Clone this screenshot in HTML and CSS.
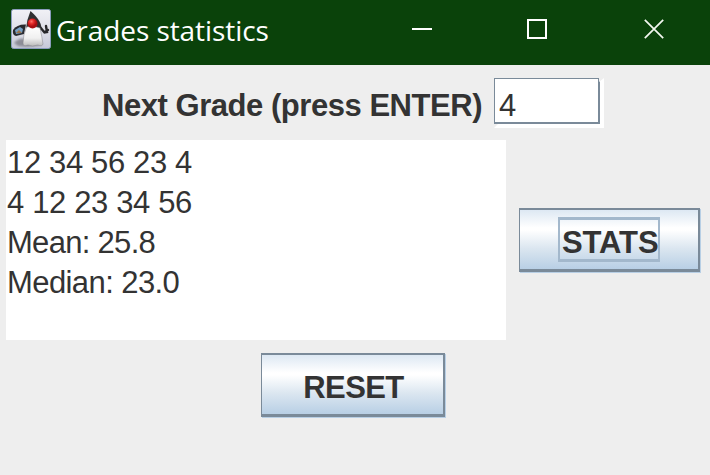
FILE: index.html
```html
<!DOCTYPE html>
<html lang="en">
<head>
<meta charset="utf-8">
<title>Grades statistics</title>
<link rel="stylesheet" href="styles.css">
</head>
<body>
<header class="titlebar">
  <svg class="app-icon" viewBox="0 0 40 40" aria-hidden="true">
    <defs>
      <linearGradient id="tile" x1="0" y1="0" x2="0" y2="1"><stop offset="0" stop-color="#f1f1f6"/><stop offset=".6" stop-color="#dcdde6"/><stop offset="1" stop-color="#c5c8d7"/></linearGradient>
      <linearGradient id="belly" x1="0" y1="0" x2="0" y2="1"><stop offset="0" stop-color="#fff"/><stop offset=".6" stop-color="#f0f0f0"/><stop offset="1" stop-color="#bcbcbc"/></linearGradient>
      <radialGradient id="nose" cx=".4" cy=".3"><stop offset="0" stop-color="#ff7069"/><stop offset=".5" stop-color="#e32625"/><stop offset="1" stop-color="#a80e12"/></radialGradient>
      <filter id="soft"><feGaussianBlur stdDeviation="1.2"/></filter>
    </defs>
    <rect x=".5" y=".5" width="39" height="39" rx="2" fill="url(#tile)" stroke="#8b9cbe"/>
    <path d="M3 34 Q8 28 15 30 L31 36 Q18 39 7 37Z" fill="#777780" opacity=".75" filter="url(#soft)"/>
    <path d="M15 15.500 Q6 15 2 21 Q1 26 5 27 L13 25Z" fill="#292a2e"/>
    <path d="M4 21 L9 18 L12 20 L11 24 L5 25Z" fill="#759fc4"/>
    <path d="M5 24 L8 21 L11 24Z" fill="#9a7349"/>
    <path d="M29 18 L33.500 23.500 L36 23 L35 17 M34 23 L37 21" fill="none" stroke="#28282a" stroke-width="2.4" stroke-linecap="round"/>
    <path d="M19.500 2 Q15.500 11 15 20 L30 21 Q32 13 19.500 2Z" fill="#303032"/>
    <path d="M15.500 18 Q22 16 29 19 Q31 28 32 35 Q31 38 27 36 Q21 38 17 36 Q12 38 12 34 Q12 26 15.500 18Z" fill="url(#belly)" stroke="#85858a" stroke-width=".5"/>
    <circle cx="21.500" cy="14.500" r="5" fill="url(#nose)"/>
  </svg>
  <h1 class="title">Grades statistics</h1>
  <svg class="window-controls" viewBox="0 0 260 24" aria-hidden="true">
    <path d="M2 11H22" stroke="#fff" stroke-width="2"/>
    <rect x="118" y="2" width="18" height="18" fill="none" stroke="#fff" stroke-width="2"/>
    <path d="M234.800 1.800L253.200 20.200M253.200 1.800L234.800 20.200" stroke="#f3f7f0" stroke-width="1.700"/>
  </svg>
</header>
<main class="content">
  <div class="entry">
    <label class="label" for="grade">Next Grade (press ENTER)</label>
    <div class="field"><input id="grade" class="field-input" type="text" value="4"></div>
  </div>
  <div class="results">
    <div class="output">
      <div>12 34 56 23 4</div>
      <div>4 12 23 34 56</div>
      <div class="mean">Mean: 25.8</div>
      <div class="median">Median: 23.0</div>
    </div>
    <button class="button stats"><span class="focus">STATS</span></button>
  </div>
  <button class="button reset">RESET</button>
</main>
</body>
</html>
```
FILE: styles.css
```css
* { box-sizing: border-box; }
body {
  margin: 0;
  width: 710px;
  height: 475px;
  overflow: hidden;
  background: #eee;
  color: #333;
  font: 31px "Liberation Sans", Arial, sans-serif;
}
.titlebar {
  height: 65px;
  padding: 9px 46px 0 11px;
  background: #0a420a;
  display: flex;
  align-items: flex-start;
}
.app-icon { width: 40px; height: 40px; flex: none; }
.title {
  margin: 0 0 0 5px;
  color: #fff;
  font: 400 28px/42px "Open Sans", "Noto Sans", sans-serif;
  letter-spacing: -0.06px;
  white-space: nowrap;
}
.window-controls { width: 260px; height: 24px; margin: 9px -6px 0 auto; flex: none; }
.content {
  display: flex;
  flex-direction: column;
  padding: 13px 9px 0 6px;
}
.entry { display: flex; padding-left: 96px; height: 50px; }
.label { width: 392px; font-weight: bold; line-height: 56px; letter-spacing: -0.46px; white-space: nowrap; }
.field {
  width: 110px;
  height: 50px;
  padding: 0 4px 4px 0;
  background: #fff;
  clip-path: polygon(0 0, 105px 0, 105px 4px, 110px 0, 110px 50px, 0 50px, 4px 46px, 0 46px);
}
.field-input {
  display: block;
  width: 106px;
  height: 46px;
  padding: 10px 0 0 4px;
  border: solid #7a8a99;
  border-width: 1px 2px 2px 1px;
  border-radius: 0;
  background: #fff;
  color: #333;
  font: inherit;
  outline: none;
}
.results { display: flex; margin-top: 12px; height: 200px; }
.output {
  width: 500px;
  height: 200px;
  padding: 3px 0 0 1px;
  background: #fff;
  line-height: 40px;
  letter-spacing: -0.36px;
}
.mean { letter-spacing: -0.7px; }
.median { letter-spacing: -0.58px; }
.button {
  height: 64px;
  padding: 0;
  border: solid #7a8a99;
  border-width: 2px 2px 3px 1px;
  border-radius: 0;
  background: linear-gradient(#dde8f3, #fff 30%, #fff 34%, #dbe6f0 65%, #b8cfe5);
  box-shadow: 1px 1px #b8cfe5;
  color: #333;
  font: bold 31px "Liberation Sans", Arial, sans-serif;
}
.stats { width: 181px; margin: 68px 0 0 13px; display: flex; padding: 7px 0 0 38px; }
.focus {
  width: 102px;
  height: 45px;
  padding-left: 2px;
  border: solid #a3b8cc;
  border-width: 3px 2px;
  line-height: 46px;
  letter-spacing: -0.1px;
  text-align: left;
}
.reset { width: 184px; margin: 13px 0 0 255px; padding: 7px 0 0 2px; letter-spacing: -0.6px; }
```
